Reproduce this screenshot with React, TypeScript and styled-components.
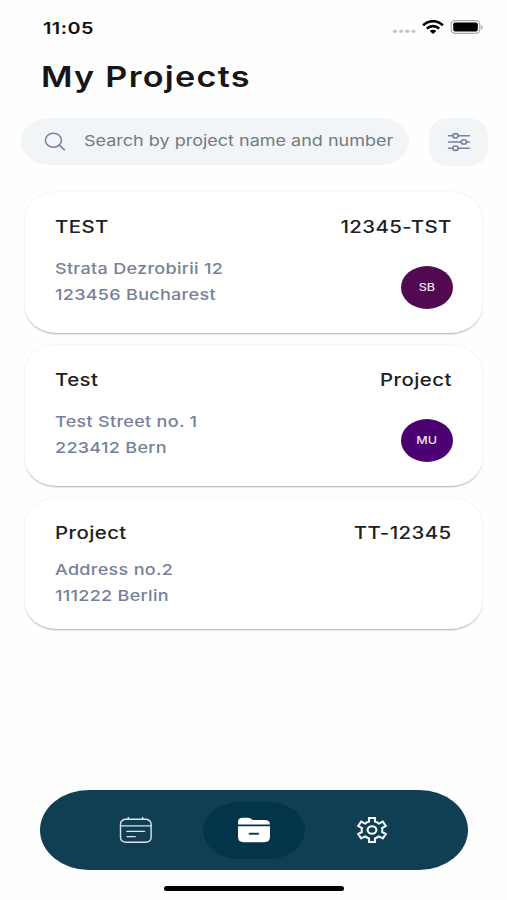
import React from "react";
import styled, { createGlobalStyle } from "styled-components";

const GlobalStyle = createGlobalStyle`
  * { box-sizing: border-box; }
  body { margin: 0; background: #fefefe; }
`;

const Screen = styled.div`
  width: 507px;
  height: 900px;
  overflow: hidden;
  display: flex;
  flex-direction: column;
  background: #fefefe;
  font-family: Inter, "Liberation Sans", sans-serif;
`;

/* Wide type: glyphs are expanded horizontally from one edge. */
const WideText = styled.span<{ $scale?: number; $origin?: string }>`
  display: block;
  width: max-content;
  white-space: nowrap;
  transform: scaleX(${(p) => p.$scale ?? 1.2});
  transform-origin: ${(p) => p.$origin ?? "left"} center;
`;

const StatusBar = styled.header`
  height: 54px;
  flex: none;
  display: flex;
  align-items: center;
  justify-content: space-between;
  padding: 0 24px 0 43px;
`;

const Clock = styled(WideText)`
  font-size: 16.5px;
  font-weight: 600;
  line-height: 20px;
  letter-spacing: 0.4px;
  color: #111;
  padding-top: 1px;
`;

const StatusIcons = styled.div`
  display: flex;
  align-items: center;
  gap: 6px;
`;

const Title = styled.h1`
  margin: 0;
  height: 46px;
  flex: none;
  padding-left: 41px;
  font-size: 28.5px;
  font-weight: 600;
  line-height: 46px;
  letter-spacing: 1.05px;
  color: #161618;
`;

const SearchRow = styled.div`
  display: flex;
  flex: none;
  justify-content: space-between;
  margin: 18px 19px 0 21px;
`;

const SearchField = styled.div`
  width: 388px;
  height: 47px;
  display: flex;
  align-items: center;
  gap: 18px;
  padding-left: 23px;
  border-radius: 28px / 23.5px;
  background: #f1f5f8;
`;

const Placeholder = styled(WideText)`
  font-size: 15px;
  line-height: 20px;
  color: #74797f;
  margin-top: -2px;
`;

const FilterButton = styled.button`
  width: 59px;
  height: 48px;
  display: grid;
  place-items: center;
  padding: 0;
  border: 0;
  border-radius: 20px / 17px;
  background: #f1f5f8;
`;

const CardList = styled.main`
  flex: 1;
  display: flex;
  flex-direction: column;
  gap: 12px;
  padding: 26px 25px 0;
`;

const Card = styled.article<{ $compact: boolean }>`
  width: 457px;
  height: ${(p) => (p.$compact ? 131 : 141)}px;
  padding: 24px 30px 0;
  border-radius: 32px / 26px;
  background: #fff;
  box-shadow:
    0 2px 2px -1px rgba(0, 0, 0, 0.3),
    0 0 2px rgba(0, 0, 0, 0.1);
`;

const CardHead = styled.div`
  display: flex;
  justify-content: space-between;
  font-size: 17px;
  font-weight: 500;
  line-height: 22px;
  letter-spacing: 0.35px;
  color: #202022;
`;

const CardBody = styled.div<{ $compact: boolean }>`
  display: flex;
  justify-content: space-between;
  margin-top: ${(p) => (p.$compact ? 13 : 18)}px;
`;

const Address = styled.div`
  font-size: 15px;
  font-weight: 500;
  line-height: 26.4px;
  letter-spacing: 0.25px;
  color: #75819a;
`;

const Avatar = styled.div<{ $color: string }>`
  width: 52px;
  height: 43px;
  margin: 10px -1px 0 0;
  display: grid;
  place-items: center;
  border-radius: 50%;
  background: ${(p) => p.$color};
  color: #eee4f1;
  font-size: 10.5px;
  font-weight: 500;
`;

const TabBar = styled.nav`
  width: 428px;
  height: 80px;
  flex: none;
  margin: 0 0 0 40px;
  padding: 0 45px;
  display: flex;
  align-items: center;
  justify-content: space-between;
  border-radius: 49px / 40px;
  background: #103e52;
`;

const Tab = styled.button<{ $active?: boolean }>`
  width: 102px;
  height: 57px;
  padding: 0;
  border: 0;
  display: grid;
  place-items: center;
  border-radius: 36px / 28.5px;
  background: ${(p) => (p.$active ? "#03344a" : "transparent")};
`;

const HomeIndicator = styled.div`
  width: 180px;
  height: 5px;
  flex: none;
  margin: 16px 0 9px 164px;
  border-radius: 3px;
  background: #000;
`;

const SearchIcon = () => (
  <svg width="22" height="19" viewBox="0 0 22 19" fill="none" stroke="#7681a3" strokeWidth="1.6" strokeLinecap="round">
    <ellipse cx="9.4" cy="8.2" rx="8" ry="7" />
    <path d="M15.2 13.2 20.2 17.6" />
  </svg>
);

const SlidersIcon = () => (
  <svg width="24" height="20" viewBox="0 0 24 20" fill="none" stroke="#7681a3" strokeWidth="1.6" strokeLinecap="round">
    <path d="M1.5 3.8H6M11 3.8H22.3M1.5 10H14.4M19.4 10H22.3M1.5 16.2H6M11 16.2H22.3" />
    <ellipse cx="8.5" cy="3.8" rx="2.7" ry="2.2" />
    <ellipse cx="16.9" cy="10" rx="2.7" ry="2.2" />
    <ellipse cx="8.5" cy="16.2" rx="2.7" ry="2.2" />
  </svg>
);

const SignalDots = () => (
  <svg width="24" height="14" viewBox="0 0 24 14" fill="#c6c6c6">
    {[2.9, 9.1, 15.3, 21.4].map((x) => (
      <ellipse key={x} cx={x} cy="11.3" rx="2.1" ry="1.8" />
    ))}
  </svg>
);

const WifiIcon = () => (
  <svg width="22" height="14" viewBox="0 0 22 14" fill="none" stroke="#000" strokeWidth="2.6">
    <path d="M1.1 5.2C6.7-.2 15.3-.2 20.9 5.2" />
    <path d="M4.8 8.6c3.6-3.3 8.8-3.3 12.4 0" />
    <path d="M7.7 11.1c2-1.7 4.6-1.7 6.6 0L11 13.9Z" fill="#000" stroke="none" />
  </svg>
);

const BatteryIcon = () => (
  <svg width="33" height="14" viewBox="0 0 33 14">
    <rect x="1.2" y=".7" width="28.6" height="12.6" rx="4" ry="3.6" fill="none" stroke="#aaa" strokeWidth="1.2" />
    <rect x="3.2" y="2.5" width="24.6" height="9" rx="2" ry="1.8" />
    <path d="M31.2 4.9c2 .7 2 3.8 0 4.5Z" fill="#aaa" />
  </svg>
);

const CalendarIcon = () => (
  <svg width="34" height="28" viewBox="0 0 34 28" fill="none" stroke="#dbe5ea" strokeWidth="1.4" strokeLinecap="round">
    <rect x="1.5" y="3.3" width="30.6" height="23" rx="5.5" ry="4.5" />
    <path d="M1.5 9.9H32.1M9.3 1.5V3.3M23.6 1.5V3.3M8 15.4H25.5M8 20.6H16.3" />
  </svg>
);

const FolderIcon = () => (
  <svg width="34" height="26" viewBox="0 0 34 26" fill="#fff">
    <path d="M1 7.4V5Q1 .8 6 .8H11Q13.5.8 15 2.4L15.8 3H27.5Q32.8 3 33 7.4Z" />
    <path d="M1 9.2H33V20Q33 25.2 27.2 25.2H6.8Q1 25.2 1 20Z" />
    <path d="M12.6 16.7H21.1" stroke="#173d55" strokeWidth="2" strokeLinecap="round" />
  </svg>
);

const GearIcon = () => (
  <svg width="34" height="28" viewBox="0 0 34 28" fill="none" stroke="#f4f7f8" strokeWidth="2.1" strokeLinejoin="miter">
    <path d="M14 2H20V5.6Q22.2 6.2 23.9 7.6L27.8 5.6L30.8 10L27.1 12.1Q27.6 14 27.1 15.9L30.8 18L27.8 22.4L23.9 20.4Q22.2 21.8 20 22.4V26H14V22.4Q11.8 21.8 10.1 20.4L6.2 22.4L3.2 18L6.9 15.9Q6.4 14 6.9 12.1L3.2 10L6.2 5.6L10.1 7.6Q11.8 6.2 14 5.6Z" />
    <ellipse cx="17" cy="14" rx="4.4" ry="3.7" />
  </svg>
);

interface Project {
  name: string;
  code: string;
  address: [string, string];
  member?: { initials: string; color: string };
}

const projects: Project[] = [
  { name: "TEST", code: "12345-TST", address: ["Strata Dezrobirii 12", "123456 Bucharest"], member: { initials: "SB", color: "#510951" } },
  { name: "Test", code: "Project", address: ["Test Street no. 1", "223412 Bern"], member: { initials: "MU", color: "#4b0072" } },
  { name: "Project", code: "TT-12345", address: ["Address no.2", "111222 Berlin"] },
];

const ProjectCard = ({ project }: { project: Project }) => {
  const compact = !project.member;
  return (
    <Card $compact={compact}>
      <CardHead>
        <WideText>{project.name}</WideText>
        <WideText $origin="right">{project.code}</WideText>
      </CardHead>
      <CardBody $compact={compact}>
        <Address>
          {project.address.map((line) => (
            <WideText key={line}>{line}</WideText>
          ))}
        </Address>
        {project.member && (
          <Avatar $color={project.member.color}>
            <WideText $origin="center">{project.member.initials}</WideText>
          </Avatar>
        )}
      </CardBody>
    </Card>
  );
};

export default function App() {
  return (
    <Screen>
      <GlobalStyle />
      <StatusBar>
        <Clock>11:05</Clock>
        <StatusIcons>
          <SignalDots />
          <WifiIcon />
          <BatteryIcon />
        </StatusIcons>
      </StatusBar>
      <Title>
        <WideText>My Projects</WideText>
      </Title>
      <SearchRow>
        <SearchField>
          <SearchIcon />
          <Placeholder>Search by project name and number</Placeholder>
        </SearchField>
        <FilterButton aria-label="Filter">
          <SlidersIcon />
        </FilterButton>
      </SearchRow>
      <CardList>
        {projects.map((project) => (
          <ProjectCard key={project.code} project={project} />
        ))}
      </CardList>
      <TabBar>
        <Tab aria-label="Calendar">
          <CalendarIcon />
        </Tab>
        <Tab aria-label="Projects" $active>
          <FolderIcon />
        </Tab>
        <Tab aria-label="Settings">
          <GearIcon />
        </Tab>
      </TabBar>
      <HomeIndicator />
    </Screen>
  );
}
